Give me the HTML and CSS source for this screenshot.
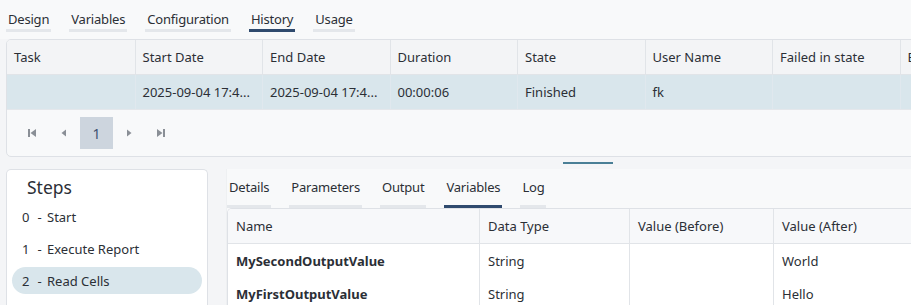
FILE: index.html
```html
<!DOCTYPE html>
<html>
<head>
<meta charset="utf-8">
<link rel="stylesheet" href="styles.css">
</head>
<body>
<div class="page">
  <nav class="tabs top-tabs">
    <span class="tab">Design</span>
    <span class="tab">Variables</span>
    <span class="tab">Configuration</span>
    <span class="tab active">History</span>
    <span class="tab">Usage</span>
  </nav>

  <section class="grid-card history">
    <div class="grow head">
      <div class="cell">Task</div>
      <div class="cell">Start Date</div>
      <div class="cell">End Date</div>
      <div class="cell">Duration</div>
      <div class="cell">State</div>
      <div class="cell">User Name</div>
      <div class="cell">Failed in state</div>
      <div class="cell">Error</div>
    </div>
    <div class="grow sel">
      <div class="cell"></div>
      <div class="cell">2025-09-04 17:4...</div>
      <div class="cell">2025-09-04 17:4...</div>
      <div class="cell">00:00:06</div>
      <div class="cell">Finished</div>
      <div class="cell">fk</div>
      <div class="cell"></div>
      <div class="cell"></div>
    </div>
    <div class="pager">
      <span class="pbtn"><svg width="10" height="10" viewBox="0 0 10 10"><rect x="1" y="1" width="2" height="8" fill="#8a8f96"/><path d="M9 1 L3.5 5 L9 9 Z" fill="#8a8f96"/></svg></span>
      <span class="pbtn"><svg width="10" height="10" viewBox="0 0 10 10"><path d="M7 1.5 L2.5 5 L7 8.5 Z" fill="#8a8f96"/></svg></span>
      <span class="pnum">1</span>
      <span class="pbtn"><svg width="10" height="10" viewBox="0 0 10 10"><path d="M3 1.5 L7.5 5 L3 8.5 Z" fill="#8a8f96"/></svg></span>
      <span class="pbtn"><svg width="10" height="10" viewBox="0 0 10 10"><path d="M1 1 L6.5 5 L1 9 Z" fill="#8a8f96"/><rect x="7" y="1" width="2" height="8" fill="#8a8f96"/></svg></span>
    </div>
  </section>

  <div class="splitter"><span class="handle"></span></div>

  <div class="lower">
    <aside class="steps">
      <h2 class="steps-title">Steps</h2>
      <ul class="step-list">
        <li class="step"><span class="num">0</span><span class="dash">-</span><span>Start</span></li>
        <li class="step"><span class="num">1</span><span class="dash">-</span><span>Execute Report</span></li>
        <li class="step current"><span class="num">2</span><span class="dash">-</span><span>Read Cells</span></li>
      </ul>
    </aside>
    <section class="detail">
      <nav class="tabs sub-tabs">
        <span class="tab">Details</span>
        <span class="tab">Parameters</span>
        <span class="tab">Output</span>
        <span class="tab active">Variables</span>
        <span class="tab">Log</span>
      </nav>
      <div class="grid-card vars">
        <div class="vrow vhead">
          <div class="cell">Name</div>
          <div class="cell">Data Type</div>
          <div class="cell">Value (Before)</div>
          <div class="cell">Value (After)</div>
        </div>
        <div class="vrow">
          <div class="cell b">MySecondOutputValue</div>
          <div class="cell">String</div>
          <div class="cell"></div>
          <div class="cell">World</div>
        </div>
        <div class="vrow">
          <div class="cell b">MyFirstOutputValue</div>
          <div class="cell">String</div>
          <div class="cell"></div>
          <div class="cell">Hello</div>
        </div>
      </div>
    </section>
  </div>
</div>
</body>
</html>
```

FILE: styles.css
```css
* { box-sizing: border-box; }
html, body { margin: 0; padding: 0; }
body {
  width: 911px;
  height: 305px;
  overflow: hidden;
  background: #f4f5f7;
  font-family: "Noto Sans", "Open Sans", sans-serif;
  font-size: 13px;
  color: #2b2f36;
}
.page { width: 911px; }

.tabs { display: flex; gap: 18px; }
.tab {
  padding: 0 2px;
  line-height: 22px;
  border-bottom: 3px solid #e4e7eb;
  color: #2b2f36;
  white-space: nowrap;
  letter-spacing: -0.2px;
}
.tab.active { border-bottom-color: #2f4a6e; }

.top-tabs {
  background: #f8f9fa;
  padding: 8px 0 7px 6px;
  height: 39px;
}

.grid-card {
  border: 1px solid #dee1e6;
  border-radius: 5px;
  overflow: hidden;
}
.history {
  margin-left: 6px;
  width: 1100px;
  background: #f8f9fa;
}
.grow { display: grid; grid-template-columns: repeat(8, 127.5px); }
.grow .cell {
  padding: 0 7px;
  border-left: 1px solid #e1e4e8;
  white-space: nowrap;
  overflow: hidden;
  display: flex;
  align-items: center;
}
.grow .cell:first-child { border-left: none; }
.head { height: 35px; background: #f3f4f6; border-bottom: 1px solid #e1e4e8; }
.sel { height: 34px; background: #d9e6ec; }
.sel .cell { border-left-color: #e0e8ee; }

.pager {
  height: 47px;
  display: flex;
  align-items: center;
  padding-left: 9px;
  border-top: 1px solid #e4e7eb;
}
.pbtn { width: 32px; height: 32px; display: flex; align-items: center; justify-content: center; }
.pnum {
  width: 33px; height: 32px;
  background: #cdd5de;
  color: #3c5070;
  font-size: 14px;
  display: flex; align-items: center; justify-content: center;
}

.splitter { height: 12px; padding-top: 5px; }
.handle {
  display: block;
  margin-left: 563px;
  width: 50px;
  height: 2px;
  background: #4a7f96;
}

.lower { display: flex; height: 140px; }
.steps {
  flex: 0 0 202px;
  margin-left: 6px;
  background: #fff;
  border: 1px solid #dee1e6;
  border-bottom: none;
  border-radius: 5px 5px 0 0;
  padding: 4px 5px 0 5px;
}
.steps-title {
  margin: 0 0 3px 15px;
  font-weight: 400;
  font-size: 17.5px;
  line-height: 26px;
  color: #2b2f36;
}
.step-list { list-style: none; margin: 0; padding: 0; display: flex; flex-direction: column; gap: 5px; }
.step {
  height: 27px;
  display: flex;
  align-items: center;
  padding-left: 10px;
  border-radius: 14px;
  white-space: nowrap;
}
.step .num { width: 10px; }
.step .dash { width: 15px; text-align: center; }
.step.current { background: #d9e6ec; }

.detail {
  margin-left: 18px;
  flex: 1;
  min-width: 0;
  background: #f8f9fa;
  border-left: 1px solid #eef0f2;
}
.sub-tabs { padding: 7px 0 0 0; height: 39px; }
.vars {
  width: 800px;
  background: #fff;
  border-bottom: none;
  border-radius: 5px 0 0 0;
}
.vrow { display: grid; grid-template-columns: 251px 150px 144px 1fr; height: 33px; }
.vrow .cell {
  padding: 0 8px;
  border-left: 1px solid #e1e4e8;
  display: flex; align-items: center;
  white-space: nowrap;
}
.vrow .cell:first-child { border-left: none; }
.vhead { height: 35px; background: #f7f8fa; border-bottom: 1px solid #e1e4e8; }
.b { font-weight: 700; }
```
